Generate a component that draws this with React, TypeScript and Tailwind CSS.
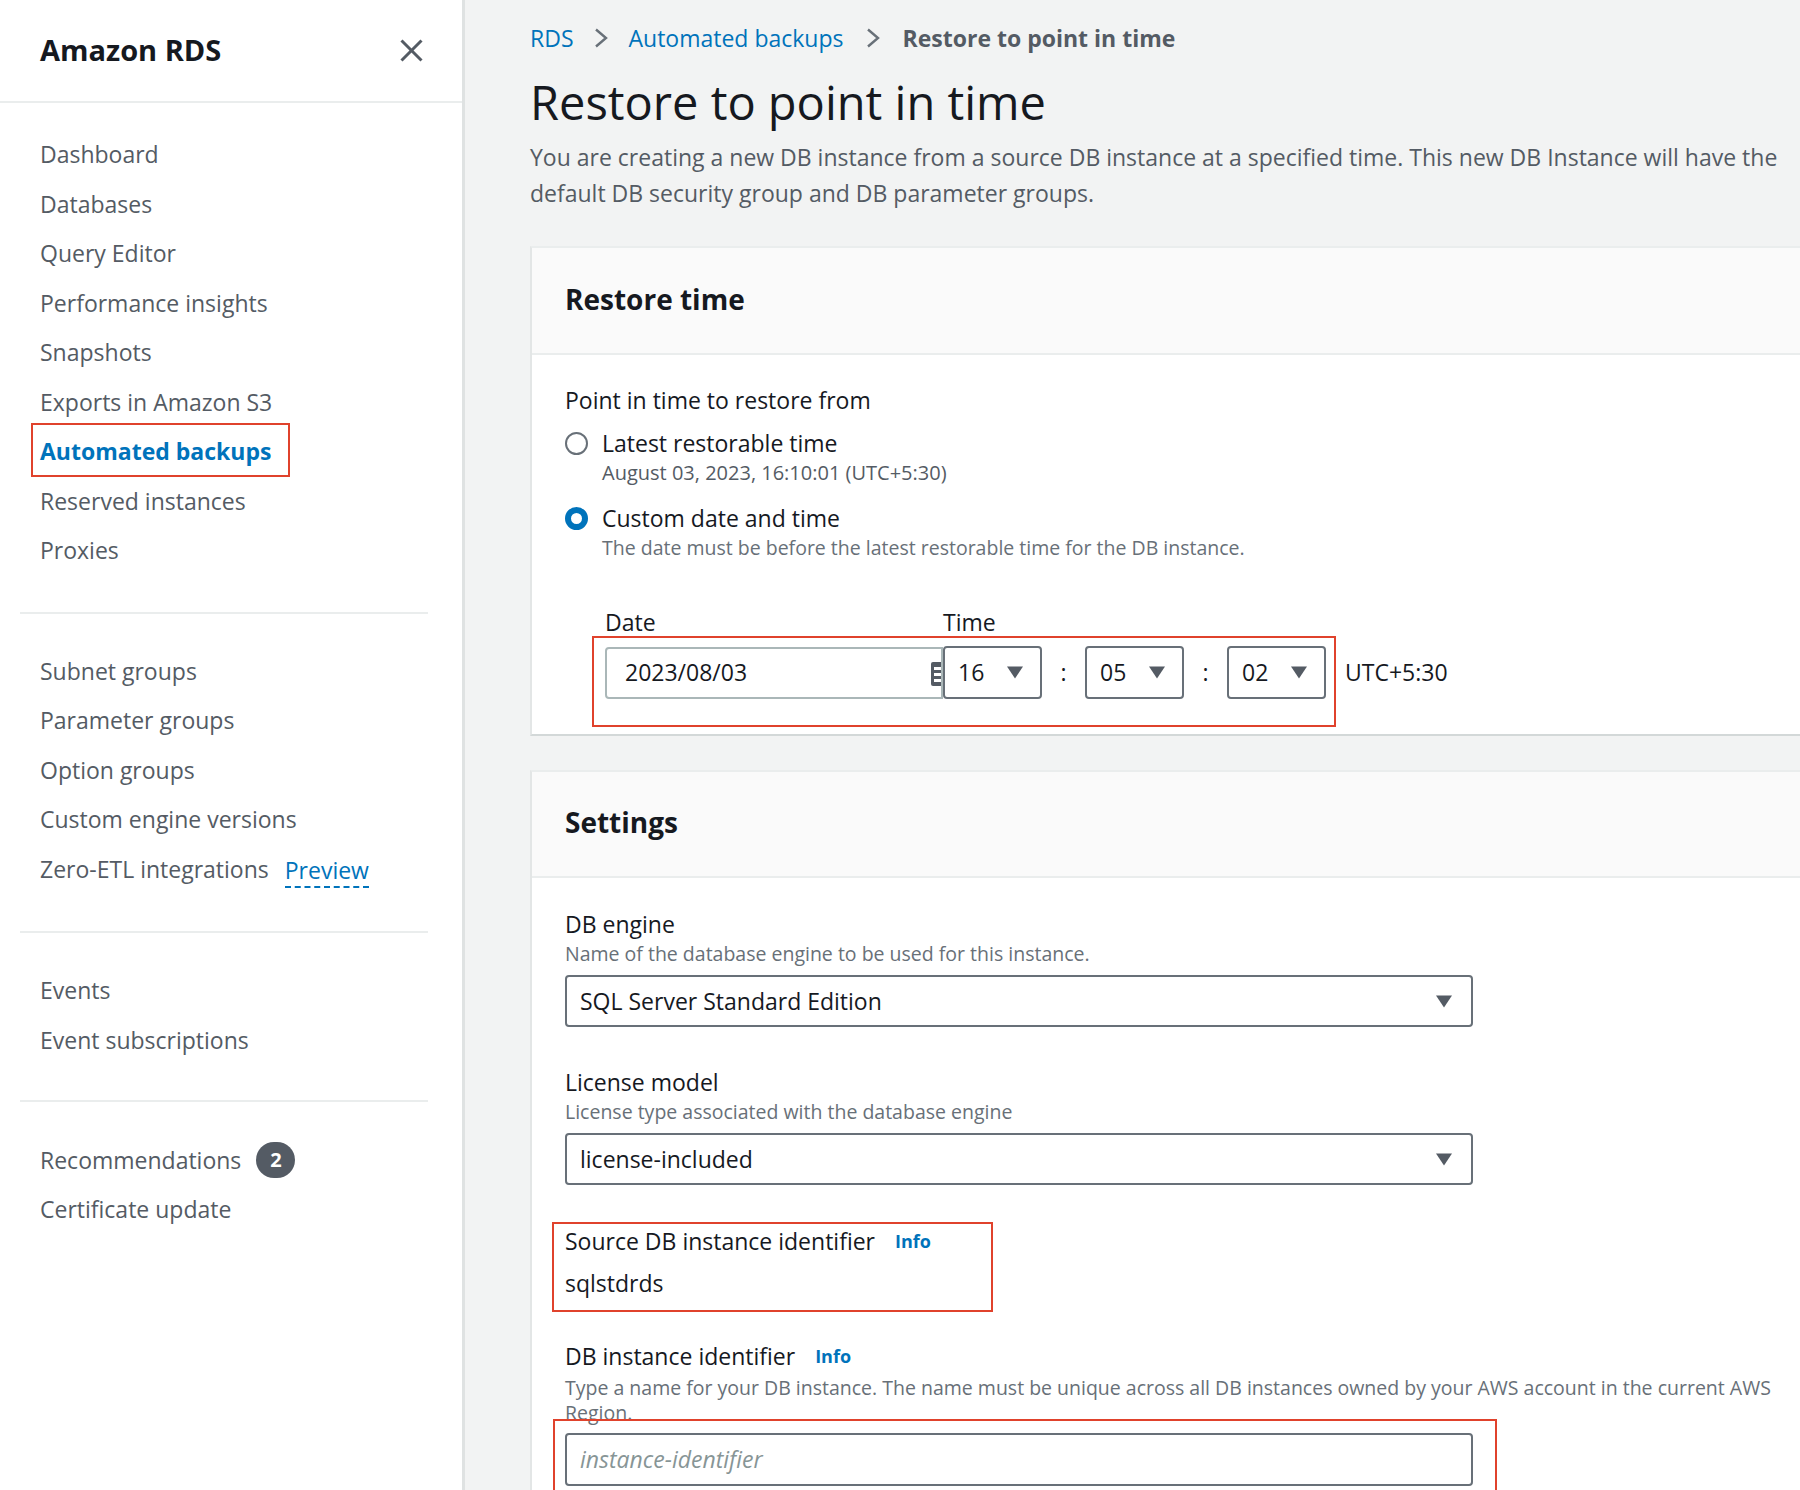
import React from "react";

const navA = [
  "Dashboard",
  "Databases",
  "Query Editor",
  "Performance insights",
  "Snapshots",
  "Exports in Amazon S3",
  "Automated backups",
  "Reserved instances",
  "Proxies",
];
const navB = ["Subnet groups", "Parameter groups", "Option groups", "Custom engine versions"];

function Arrow({ w = 18, h = 13 }: { w?: number; h?: number }) {
  return (
    <svg width={w} height={h} viewBox="0 0 18 13" className="shrink-0">
      <polygon points="1,0.5 17,0.5 9,12.5" fill="#545b64" />
    </svg>
  );
}

function Chevron() {
  return (
    <svg width="16" height="20" viewBox="0 0 16 20" className="shrink-0">
      <polyline points="3,1.5 13,10 3,18.5" fill="none" stroke="#687078" strokeWidth="2.4" />
    </svg>
  );
}

function Divider() {
  return <div className="mx-[20px] w-[408px] h-[2px] bg-[#eaeded]" />;
}

function NavItem({ label, active }: { label: string; active?: boolean }) {
  if (active) {
    return (
      <div className="relative leading-[49.5px] text-[23px] font-bold text-[#0073bb]">
        {label}
        <span className="absolute left-[-9px] top-[-4px] w-[259px] h-[54px] border-2 border-[#e0422c]" />
      </div>
    );
  }
  return <div className="leading-[49.5px] text-[23px] text-[#545b64]">{label}</div>;
}

function Select({ value, width }: { value: string; width: string }) {
  return (
    <div
      className={`${width} h-[52px] flex items-center justify-between border-2 border-[#687078] rounded-[4px] bg-white pl-[13px] pr-[18px] text-[23px] text-[#16191f]`}
    >
      <span>{value}</span>
      <Arrow />
    </div>
  );
}

function SmallSelect({ value }: { value: string }) {
  return (
    <div className="w-[99px] h-[53px] flex items-center justify-between border-2 border-[#687078] rounded-[4px] bg-white pl-[13px] pr-[16px] text-[23px] text-[#16191f]">
      <span>{value}</span>
      <Arrow />
    </div>
  );
}

function CardHeader({ title, h }: { title: string; h: string }) {
  return (
    <div className={`${h} bg-[#fafafa] border-b-2 border-[#eaeded] flex items-center px-[33px]`}>
      <h2 className="-mt-[4px] text-[28px] font-bold text-[#16191f]">{title}</h2>
    </div>
  );
}

function Radio({ checked }: { checked?: boolean }) {
  if (checked) {
    return <span className="w-[23px] h-[23px] rounded-full border-[6px] border-[#0073bb] bg-white shrink-0" />;
  }
  return <span className="w-[23px] h-[23px] rounded-full border-2 border-[#687078] bg-white shrink-0" />;
}

export default function App() {
  return (
    <div className="flex w-[1800px] h-[1490px] overflow-hidden font-['Open_Sans','Noto_Sans',sans-serif]">
      {/* Sidebar */}
      <aside className="w-[465px] shrink-0 h-full bg-white border-r-[3px] border-[#dfe2e2]">
        <div className="h-[103px] flex items-center justify-between pl-[40px] pr-[39px] border-b-2 border-[#eaeded]">
          <h1 className="-mt-[2px] text-[29px] font-bold text-[#16191f]">Amazon RDS</h1>
          <svg width="23" height="23" viewBox="0 0 23 23">
            <line x1="1.5" y1="1.5" x2="21.5" y2="21.5" stroke="#545b64" strokeWidth="3" />
            <line x1="21.5" y1="1.5" x2="1.5" y2="21.5" stroke="#545b64" strokeWidth="3" />
          </svg>
        </div>

        <nav className="pl-[40px] pt-[27px] pb-[36px]">
          {navA.map((n) => (
            <NavItem key={n} label={n} active={n === "Automated backups"} />
          ))}
        </nav>
        <Divider />
        <nav className="pl-[40px] pt-[33px] pb-[37px]">
          {navB.map((n) => (
            <NavItem key={n} label={n} />
          ))}
          <div className="flex items-center h-[49.5px] text-[23px] text-[#545b64]">
            <span>Zero-ETL integrations</span>
            <span className="ml-[16px] inline-block leading-[32px] text-[#0073bb] border-b-2 border-dashed border-[#0073bb] mt-[4px]">
              Preview
            </span>
          </div>
        </nav>
        <Divider />
        <nav className="pl-[40px] pt-[33px] pb-[35px]">
          <NavItem label="Events" />
          <NavItem label="Event subscriptions" />
        </nav>
        <Divider />
        <nav className="pl-[40px] pt-[33px]">
          <div className="flex items-center h-[49.5px] text-[23px] text-[#545b64]">
            <span>Recommendations</span>
            <span className="ml-[15px] w-[39px] h-[36px] rounded-full bg-[#545b64] text-white text-[20px] font-bold flex items-center justify-center">
              2
            </span>
          </div>
          <NavItem label="Certificate update" />
        </nav>
      </aside>

      {/* Main */}
      <main className="flex-1 h-full bg-[#f2f3f3] pl-[65px] overflow-hidden">
        <div className="w-[1340px]">
          {/* Breadcrumb */}
          <div className="pt-[23px] h-[53px] flex items-center text-[23px]">
            <span className="text-[#0073bb]">RDS</span>
            <span className="ml-[19px]">
              <Chevron />
            </span>
            <span className="ml-[20px] text-[#0073bb]">Automated backups</span>
            <span className="ml-[21px]">
              <Chevron />
            </span>
            <span className="ml-[22px] font-bold text-[#545b64]">Restore to point in time</span>
          </div>

          <h1 className="mt-[21px] text-[47px] leading-[56px] text-[#16191f]">Restore to point in time</h1>
          <p className="mt-[9px] w-[1295px] text-[23px] leading-[36px] text-[#545b64]">
            You are creating a new DB instance from a source DB instance at a specified time. This new DB Instance will
            have the default DB security group and DB parameter groups.
          </p>

          {/* Restore time card */}
          <section className="mt-[35px] bg-white border-t-2 border-l-2 border-b-2 border-t-[#eaeded] border-l-[#e3e6e6] border-b-[#d3d8d8]">
            <CardHeader title="Restore time" h="h-[107px]" />
            <div className="px-[33px] pt-[29px] pb-[35px] text-[#16191f]">
              <div className="text-[23px] leading-[32px]">Point in time to restore from</div>

              <div className="mt-[11px] flex items-center gap-[14px] h-[32px]">
                <Radio />
                <span className="text-[23px]">Latest restorable time</span>
              </div>
              <div className="pl-[37px] text-[20px] leading-[28px] text-[#545b64]">
                August 03, 2023, 16:10:01 (UTC+5:30)
              </div>

              <div className="mt-[15px] flex items-center gap-[14px] h-[32px]">
                <Radio checked />
                <span className="text-[23px]">Custom date and time</span>
              </div>
              <div className="pl-[37px] text-[19.5px] leading-[28px] text-[#687078]">
                The date must be before the latest restorable time for the DB instance.
              </div>

              <div className="mt-[44px] ml-[40px]">
                <div className="flex h-[32px] items-center text-[23px]">
                  <span className="w-[338px]">Date</span>
                  <span>Time</span>
                </div>
                <div className="relative mt-[8px] flex items-center text-[23px]">
                  <div className="relative w-[338px] h-[52px] flex items-center border-2 border-[#aab7b8] rounded-l-[4px] bg-white pl-[18px]">
                    <span>2023/08/03</span>
                    <svg
                      width="10"
                      height="24"
                      viewBox="0 0 10 24"
                      className="absolute right-0 top-[13px]"
                    >
                      <rect x="0" y="0" width="14" height="24" rx="2" fill="#545b64" />
                      <rect x="3" y="5" width="7" height="3" fill="#fff" />
                      <rect x="3" y="11" width="7" height="3" fill="#fff" />
                      <rect x="3" y="17" width="7" height="3" fill="#fff" />
                    </svg>
                  </div>
                  <SmallSelect value="16" />
                  <span className="w-[43px] text-center">:</span>
                  <SmallSelect value="05" />
                  <span className="w-[43px] text-center">:</span>
                  <SmallSelect value="02" />
                  <span className="ml-[19px]">UTC+5:30</span>
                  <span className="absolute left-[-13px] top-[-10px] w-[744px] h-[91px] border-2 border-[#e0422c]" />
                </div>
              </div>
            </div>
          </section>

          {/* Settings card */}
          <section className="mt-[34px] bg-white border-t-2 border-l-2 border-t-[#eaeded] border-l-[#e3e6e6]">
            <CardHeader title="Settings" h="h-[106px]" />
            <div className="px-[33px] pt-[30px] pb-[40px] text-[#16191f]">
              <div className="text-[23px] leading-[32px]">DB engine</div>
              <div className="text-[19.5px] leading-[28px] text-[#687078]">
                Name of the database engine to be used for this instance.
              </div>
              <div className="mt-[7px]">
                <Select value="SQL Server Standard Edition" width="w-[908px]" />
              </div>

              <div className="mt-[39px] text-[23px] leading-[32px]">License model</div>
              <div className="text-[19.5px] leading-[28px] text-[#687078]">
                License type associated with the database engine
              </div>
              <div className="mt-[7px]">
                <Select value="license-included" width="w-[908px]" />
              </div>

              <div className="relative mt-[40px]">
                <div className="flex items-center text-[23px] leading-[32px]">
                  <span>Source DB instance identifier</span>
                  <span className="ml-[20px] text-[18px] font-bold text-[#0073bb]">Info</span>
                </div>
                <div className="mt-[10px] text-[23px] leading-[32px]">sqlstdrds</div>
                <span className="absolute left-[-13px] top-[-3px] w-[441px] h-[90px] border-2 border-[#e0422c]" />
              </div>

              <div className="mt-[41px] flex items-center text-[23px] leading-[32px]">
                <span>DB instance identifier</span>
                <span className="ml-[20px] text-[18px] font-bold text-[#0073bb]">Info</span>
              </div>
              <div className="mt-[3px] text-[19.5px] leading-[25px] text-[#687078]">
                Type a name for your DB instance. The name must be unique across all DB instances owned by your AWS
                account in the current AWS Region.
              </div>
              <div className="relative mt-[8px]">
                <div className="w-[908px] h-[53px] flex items-center border-2 border-[#687078] rounded-[4px] bg-white pl-[13px] text-[23px] italic text-[#879596]">
                  instance-identifier
                </div>
                <span className="absolute left-[-12px] top-[-14px] w-[944px] h-[120px] border-2 border-[#e0422c]" />
              </div>
            </div>
          </section>
        </div>
      </main>
    </div>
  );
}
